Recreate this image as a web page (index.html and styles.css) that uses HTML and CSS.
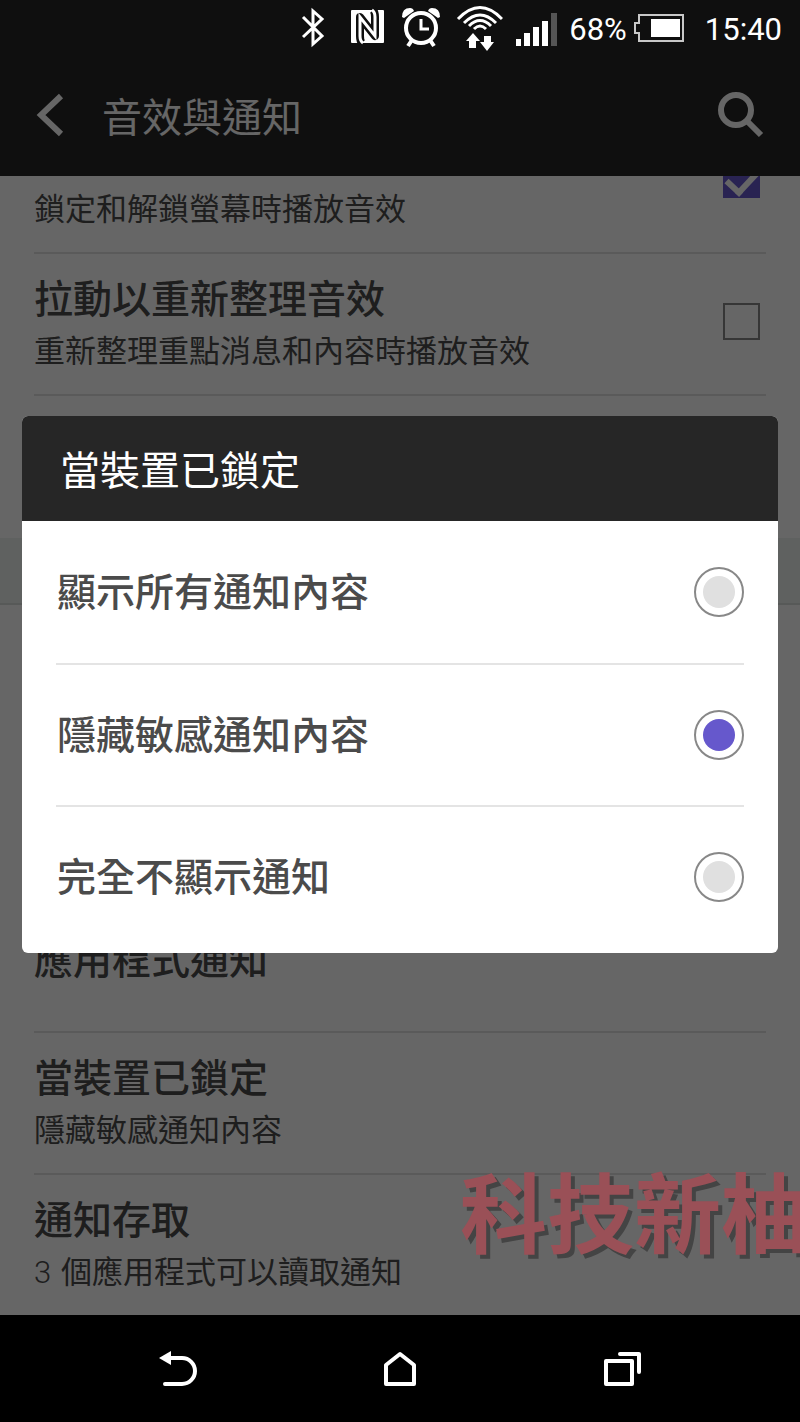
FILE: index.html
```html
<!DOCTYPE html>
<html lang="zh-Hant">
<head>
  <meta charset="UTF-8">
  <meta name="viewport" content="width=device-width, initial-scale=1">
  <title>音效與通知</title>
  <link rel="stylesheet" href="styles.css">
</head>
<body>

<div class="status-bar">
  <!-- bluetooth -->
  <svg width="36" height="54" viewBox="0 0 36 54" fill="none" stroke="#fff" stroke-width="3">
    <path d="M3 17 L22 36 L13 44 V11 L22 19 L3 37"/>
  </svg>
  <!-- nfc -->
  <svg width="41" height="54" viewBox="0 0 41 54" fill="none">
    <rect x="3" y="10" width="33" height="33" rx="1" fill="#fff"/>
    <path d="M14 43 Q12 41 12 36 V17 L27 36 V17 Q27 12 25 10" stroke="#0f0f0f" stroke-width="8" stroke-linejoin="round"/>
    <path d="M15 43 Q12 41 12 36 V17 L27 36 V17 Q27 12 24 10" stroke="#fff" stroke-width="3"/>
  </svg>
  <!-- alarm -->
  <svg width="42" height="54" viewBox="0 0 42 54" fill="none" stroke="#fff" stroke-width="4">
    <circle cx="20" cy="28" r="15"/>
    <path d="M20 19 V29 H28" stroke-width="3"/>
    <path d="M11 40 L7 46 M29 40 L33 46"/>
    <path d="M1 17 Q1 8 9 8 Q12 8 13 11 L3 18 Z M39 17 Q39 8 31 8 Q28 8 27 11 L37 18 Z" fill="#fff" stroke="none"/>
  </svg>
  <!-- wifi -->
  <svg width="48" height="54" viewBox="0 0 48 54" fill="none" stroke="#fff" stroke-width="3">
    <path d="M3 19 Q25 -4 47 19 M9 23 Q25 7 41 23 M14 26 Q25 15 36 26 M19 29 Q25 23 31 29"/>
    <path d="M18 33 L25 41 H21 V48 H14 V41 H11 Z M29 36 H36 V42 H39 L32 51 L25 42 H29 Z" fill="#fff" stroke="none"/>
  </svg>
  <!-- signal -->
  <svg width="42" height="54" viewBox="0 0 42 54" fill="#fff">
    <path d="M1 39 h5 v7 h-5 z M9 33 h6 v13 h-6 z M18 27 h6 v19 h-6 z M27 21 h6 v25 h-6 z"/>
    <rect x="36" y="13" width="6" height="33" fill="#555"/>
  </svg>
  <span class="battery">
    68%
    <svg width="52" height="54" viewBox="0 0 52 54">
      <path d="M6 15 H50 V41 H6 V33 H2 V23 H6 Z" fill="none" stroke="#c8c8c8" stroke-width="2"/>
      <rect x="18" y="19" width="29" height="18" fill="#fff"/>
    </svg>
  </span>
  <span class="clock">15:40</span>
</div>

<div class="screen">
  <header class="action-bar">
    <button class="icon-button" aria-label="返回">
      <svg width="28" height="44" viewBox="0 0 28 44">
        <path d="M25 3 L5 22 L25 41" fill="none" stroke="#fff" stroke-width="6"/>
      </svg>
    </button>
    <h1>音效與通知</h1>
    <button class="icon-button" aria-label="搜尋">
      <svg width="46" height="46" viewBox="0 0 46 46" fill="none" stroke="#fff" stroke-width="6">
        <circle cx="18" cy="18" r="15"/>
        <path d="M28 28 L43 43"/>
      </svg>
    </button>
  </header>

  <main class="settings">
    <label class="row">
      <span class="text">
        <span class="title"></span>
        <span class="summary">鎖定和解鎖螢幕時播放音效</span>
      </span>
      <input type="checkbox" checked>
    </label>
    <label class="row">
      <span class="text">
        <span class="title">拉動以重新整理音效</span>
        <span class="summary">重新整理重點消息和內容時播放音效</span>
      </span>
      <input type="checkbox">
    </label>
    <div class="row"></div>
    <div class="section"></div>
    <div class="row"></div>
    <div class="row"></div>
    <div class="row">
      <span class="text">
        <span class="title">應用程式通知</span>
      </span>
    </div>
    <div class="row">
      <span class="text">
        <span class="title">當裝置已鎖定</span>
        <span class="summary">隱藏敏感通知內容</span>
      </span>
    </div>
    <div class="row">
      <span class="text">
        <span class="title">通知存取</span>
        <span class="summary"><span class="count">3</span> 個應用程式可以讀取通知</span>
      </span>
    </div>
  </main>

  <div class="scrim">
    <form class="dialog" role="dialog" aria-labelledby="dialog-title">
      <h2 id="dialog-title">當裝置已鎖定</h2>
      <div class="options">
        <label class="option">
          <span>顯示所有通知內容</span>
          <input type="radio" name="lock" value="all">
        </label>
        <label class="option">
          <span>隱藏敏感通知內容</span>
          <input type="radio" name="lock" value="hide" checked>
        </label>
        <label class="option">
          <span>完全不顯示通知</span>
          <input type="radio" name="lock" value="none">
        </label>
      </div>
    </form>
  </div>

  <div class="watermark">科技新柚</div>
</div>

<nav class="nav-bar">
  <button class="icon-button" aria-label="返回">
    <svg width="40" height="40" viewBox="0 0 40 40">
      <path d="M10 8 H24 A13 13 0 0 1 24 34 H7" fill="none" stroke="#fff" stroke-width="4" stroke-linecap="round"/>
      <path d="M1 8 L13 1 V15 Z" fill="#fff"/>
    </svg>
  </button>
  <button class="icon-button" aria-label="首頁">
    <svg width="40" height="40" viewBox="0 0 40 40" fill="none" stroke="#fff" stroke-width="4" stroke-linejoin="round">
      <path d="M20 4 L34 15 V34 H6 V15 Z"/>
    </svg>
  </button>
  <button class="icon-button" aria-label="最近使用">
    <svg width="40" height="40" viewBox="0 0 40 40" fill="none" stroke="#fff" stroke-width="4" stroke-linejoin="round" stroke-linecap="round">
      <path d="M4 11 H30 V34 H4 Z M18 4 H37 V22"/>
    </svg>
  </button>
</nav>

</body>
</html>
```
FILE: styles.css
```css
* {
  box-sizing: border-box;
}
body {
  margin: 0;
  height: 100vh;
  display: flex;
  flex-direction: column;
  background: #000;
  font-family: Roboto, "Noto Sans CJK TC", sans-serif;
}
svg {
  display: block;
}
h1, h2 {
  margin: 0;
  font-size: 40px;
  font-weight: 400;
  color: #fff;
}
.icon-button {
  padding: 0;
  border: none;
  background: none;
}

/* status bar */
.status-bar {
  display: flex;
  justify-content: flex-end;
  align-items: flex-start;
  gap: 12px;
  height: 54px;
  padding-right: 18px;
  background: #0f0f0f;
  color: #fff;
  font-size: 31px;
  line-height: 60px;
}
.battery {
  display: flex;
  align-items: flex-start;
  gap: 6px;
}
.clock {
  margin-left: 8px;
}

/* settings page */
.screen {
  position: relative;
  flex: 1;
  min-height: 0;
  display: flex;
  flex-direction: column;
  overflow: hidden;
  background: #fff;
}
.action-bar {
  flex: none;
  display: flex;
  align-items: center;
  gap: 38px;
  height: 122px;
  padding: 0 36px;
  background: #262626;
}
.action-bar h1 {
  flex: 1;
}
.settings {
  flex: 1;
  min-height: 0;
  display: flex;
  flex-direction: column;
  justify-content: flex-end;
  overflow: hidden;
}
.row {
  flex: none;
  display: flex;
  align-items: center;
  justify-content: space-between;
  height: 142px;
  margin: 0 34px;
  padding-right: 6px;
  border-top: 2px solid #e2e2e2;
  color: #4b4b4b;
}
.section {
  flex: none;
  height: 69px;
  border-top: 2px solid #fff;
  border-bottom: 2px solid #dadfdc;
  background: #edf3f0;
}
.text {
  display: flex;
  flex-direction: column;
}
.title {
  min-height: 56px;
  font-size: 39px;
  font-weight: 500;
  line-height: 56px;
}
.summary {
  font-size: 31px;
  line-height: 48px;
}
.count {
  margin-right: 2px;
  font-weight: 300;
}
.row input {
  appearance: none;
  width: 37px;
  height: 37px;
  margin: 0 0 6px;
  border: 2px solid #888;
}
.row input:checked {
  border: none;
  background: #6658cc;
}
.row input:checked::before {
  content: "";
  display: block;
  width: 24px;
  height: 14px;
  margin: 8px 4px;
  border-left: 6px solid #fff;
  border-bottom: 6px solid #fff;
  transform: rotate(-47deg);
}

/* dialog */
.scrim {
  position: absolute;
  inset: 0;
  display: flex;
  align-items: center;
  padding: 0 22px;
  background: rgba(0, 0, 0, 0.6);
}
.dialog {
  flex: 1;
  border-radius: 6px;
  overflow: hidden;
  background: #fff;
}
.dialog h2 {
  padding: 7px 38px 0;
  line-height: 98px;
  background: #262626;
}
.options {
  padding: 0 34px 6px;
}
.option {
  display: flex;
  align-items: center;
  justify-content: space-between;
  height: 142px;
  color: #4b4b4b;
  font-size: 39px;
  font-weight: 500;
  line-height: 56px;
}
.option span {
  padding: 2px 0 0 1px;
}
.option + .option {
  border-top: 2px solid #e4e4e4;
}
.option input {
  appearance: none;
  width: 50px;
  height: 50px;
  margin: 0;
  padding: 7px;
  border: 2px solid #888;
  border-radius: 50%;
  background: #e0e0e0 content-box;
}
.option input:checked {
  background-color: #6658cc;
}

.watermark {
  position: absolute;
  left: 460px;
  bottom: 36px;
  color: #9a5057;
  font-size: 87px;
  font-weight: 700;
  line-height: 124px;
  white-space: nowrap;
  text-shadow: 4px 4px 0 #444;
}

/* navigation */
.nav-bar {
  flex: none;
  display: flex;
  justify-content: space-between;
  align-items: center;
  height: 107px;
  padding: 2px 158px 0;
}
```
